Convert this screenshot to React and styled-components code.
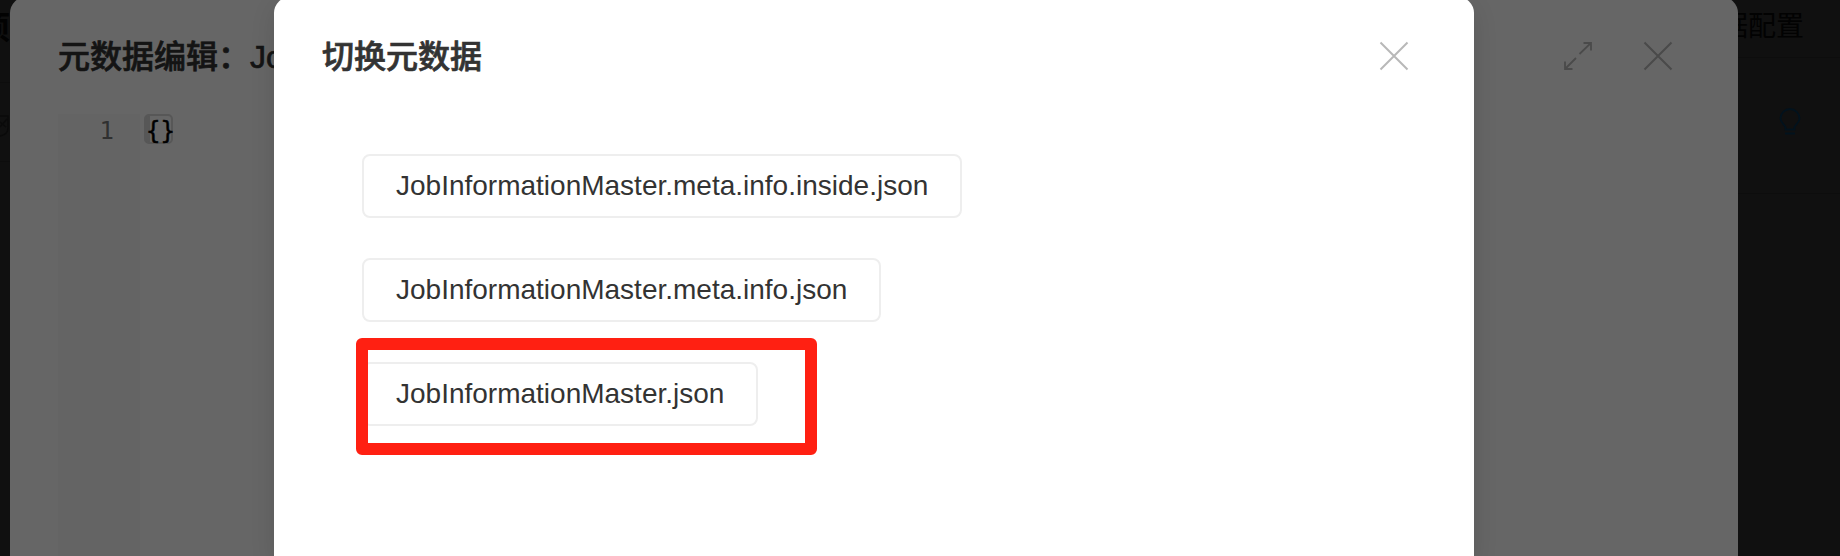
import React from 'react';
import styled, { createGlobalStyle } from 'styled-components';

const Global = createGlobalStyle`
  * { box-sizing: border-box; }
  body { margin: 0; background: #101010; overflow: hidden; }
`;

const sans = '"Liberation Sans", "Noto Sans CJK SC", sans-serif';
const mono = '"DejaVu Sans Mono", monospace';

const Page = styled.div`
  position: relative;
  width: 1840px;
  height: 556px;
  overflow: hidden;
  background: #101010;
  font-family: ${sans};
`;

const Backdrop = styled.div`
  display: flex;
  justify-content: space-between;
  height: 100%;
  color: #020202;
`;

const TopText = styled.div`
  font-size: ${p => p.$size}px;
  font-weight: ${p => p.$weight || 400};
  line-height: 40px;
  white-space: nowrap;
`;

const LeftSide = styled.div`
  display: flex;
  flex-direction: column;
  align-items: flex-end;
  width: 10px;
  padding-top: 8px;
  overflow: hidden;
`;

const RightSide = styled.div`
  display: flex;
  flex-direction: column;
  align-items: flex-end;
  width: 150px;
  padding: 7px 36px 0 0;
`;

const Bulb = styled.svg`
  width: 24px;
  height: 28px;
  margin: 50px 2px 0 0;
  fill: none;
  stroke: #02121d;
  stroke-width: 1.8;
`;

const Badge = styled.svg`
  width: 24px;
  height: 24px;
  flex: none;
  margin-top: 31px;
  fill: none;
  stroke: #0a0a0a;
  stroke-width: 1.5;
`;

const Rule = styled.div`
  align-self: stretch;
  flex: none;
  height: 1px;
  margin: ${p => p.$gap}px ${p => p.$bleed || 0}px 0 0;
  background: #0d0d0d;
`;

const Dialog = styled.section`
  position: absolute;
  top: -3px;
  bottom: 0;
  left: ${p => p.$left}px;
  width: ${p => p.$width}px;
  display: flex;
  flex-direction: column;
  border-radius: 16px 16px 0 0;
  background: ${p => p.$bg};
  box-shadow: ${p => p.$shadow || 'none'};
`;

const Header = styled.header`
  display: flex;
  align-items: center;
  justify-content: space-between;
  height: 117px;
  padding: 1px 64px 0 48px;
  flex: none;
`;

const Title = styled.h2`
  margin: 2px 0 0;
  font-size: 32px;
  font-weight: 500;
  line-height: 48px;
  color: ${p => p.$color};
  -webkit-text-stroke: 0.7px ${p => p.$color};
  white-space: pre;
`;

const Actions = styled.div`
  display: flex;
  align-items: center;
  gap: 48px;
`;

const Icon = styled.svg`
  display: block;
  width: 32px;
  height: 32px;
  fill: none;
  stroke: ${p => p.$color};
  stroke-width: ${p => p.$thin ? 1.8 : 2};
`;

const Editor = styled.div`
  display: flex;
  flex: 1;
  padding-left: 48px;
  font: 24px/34px ${mono};
`;

const Gutter = styled.div`
  width: 82px;
  padding-right: 26px;
  text-align: right;
  background: #646464;
  color: #303030;
`;

const Code = styled.div`
  padding-left: 4px;
`;

const Brackets = styled.div`
  height: 30px;
  width: 29px;
  line-height: 30px;
  border: 2px solid #575757;
  border-radius: 5px;
  background: linear-gradient(90deg, #575757 4px, transparent 4px);
  color: #000;
  -webkit-text-stroke: 0.4px #000;
  white-space: nowrap;
`;

const FileList = styled.div`
  display: flex;
  flex-direction: column;
  align-items: flex-start;
  gap: 40px;
  padding: 40px 0 0 88px;
`;

const FileButton = styled.button`
  height: 64px;
  padding: 0 32px;
  border: 2px solid #eee;
  border-radius: 8px;
  background: #fff;
  color: #333;
  font: 28px/60px ${sans};
`;

const Highlight = styled.div`
  position: absolute;
  left: 356px;
  top: 338px;
  width: 461px;
  height: 117px;
  border: 12px solid #ff2012;
  border-radius: 6px;
`;

const CloseIcon = ({ color }) => (
  <Icon viewBox="0 0 32 32" $color={color}>
    <path d="M2.500 2.500 29.500 29.500M29.500 2.500 2.500 29.500" />
  </Icon>
);

const ExpandIcon = ({ color }) => (
  <Icon viewBox="0 0 32 32" $color={color} $thin>
    <path d="M17.500 14 29 2.800M21.500 3H29V10.500M14 18 3 29M3 21.500V29H10.500" />
  </Icon>
);

const files = [
  'JobInformationMaster.meta.info.inside.json',
  'JobInformationMaster.meta.info.json',
  'JobInformationMaster.json',
];

export default function App() {
  return (
    <Page>
      <Global />
      <Backdrop>
        <LeftSide>
          <TopText $size={32} $weight={700}>项</TopText>
          <Rule $gap={34} />
          <Badge viewBox="0 0 24 24">
            <path d="M14 2h8v12c0 4-3 7-8 8M14 8l6 5M21 5l-7 8" />
          </Badge>
          <Rule $gap={23} />
        </LeftSide>
        <RightSide>
          <TopText $size={28}>数据配置</TopText>
          <Rule $gap={10} $bleed={-36} />
          <Bulb viewBox="0 0 24 28">
            <path d="M7.500 21.500v-2.500C6 16 2.500 14.500 2.500 10.500a9.500 9.500 0 0 1 19 0C21.500 14.500 18 16 16.500 19v2.500ZM7 25.500h10" />
          </Bulb>
          <Rule $gap={57} $bleed={-36} />
        </RightSide>
      </Backdrop>
      <Dialog $left={10} $width={1728} $bg="#666">
        <Header>
          <Title $color="#141414">元数据编辑：JobInformationMaster</Title>
          <Actions>
            <ExpandIcon color="#4a4a4a" />
            <CloseIcon color="#4a4a4a" />
          </Actions>
        </Header>
        <Editor>
          <Gutter>1</Gutter>
          <Code><Brackets>{'{}'}</Brackets></Code>
        </Editor>
      </Dialog>
      <Dialog $left={274} $width={1200} $bg="#fff" $shadow="0 8px 24px rgba(0,0,0,.12)">
        <Header>
          <Title $color="#333">切换元数据</Title>
          <CloseIcon color="#b8b8b8" />
        </Header>
        <FileList>
          {files.map(name => <FileButton key={name}>{name}</FileButton>)}
        </FileList>
      </Dialog>
      <Highlight />
    </Page>
  );
}
